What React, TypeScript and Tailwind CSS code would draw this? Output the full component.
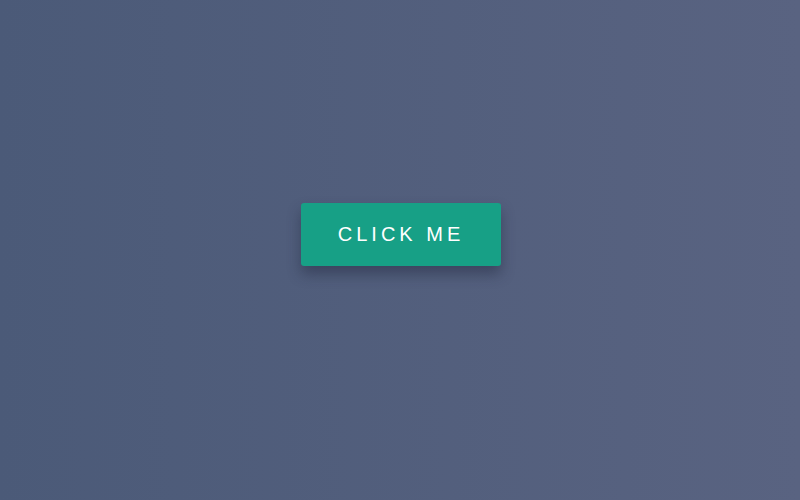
export default function App() {
  return (
    <div className="flex h-[500px] w-[800px] items-center justify-center bg-gradient-to-r from-[#4b5a78] to-[#596381] font-['Liberation_Sans',Arial,sans-serif]">
      <button
        type="button"
        className="ml-[2px] mt-[-31px] flex h-[63px] w-[200px] items-center justify-center rounded-[3px] bg-[#17a086] pb-[2px] text-[20px] tracking-[0.2em] text-white shadow-[0_8px_14px_rgba(30,38,60,0.45)]"
      >
        CLICK ME
      </button>
    </div>
  );
}
